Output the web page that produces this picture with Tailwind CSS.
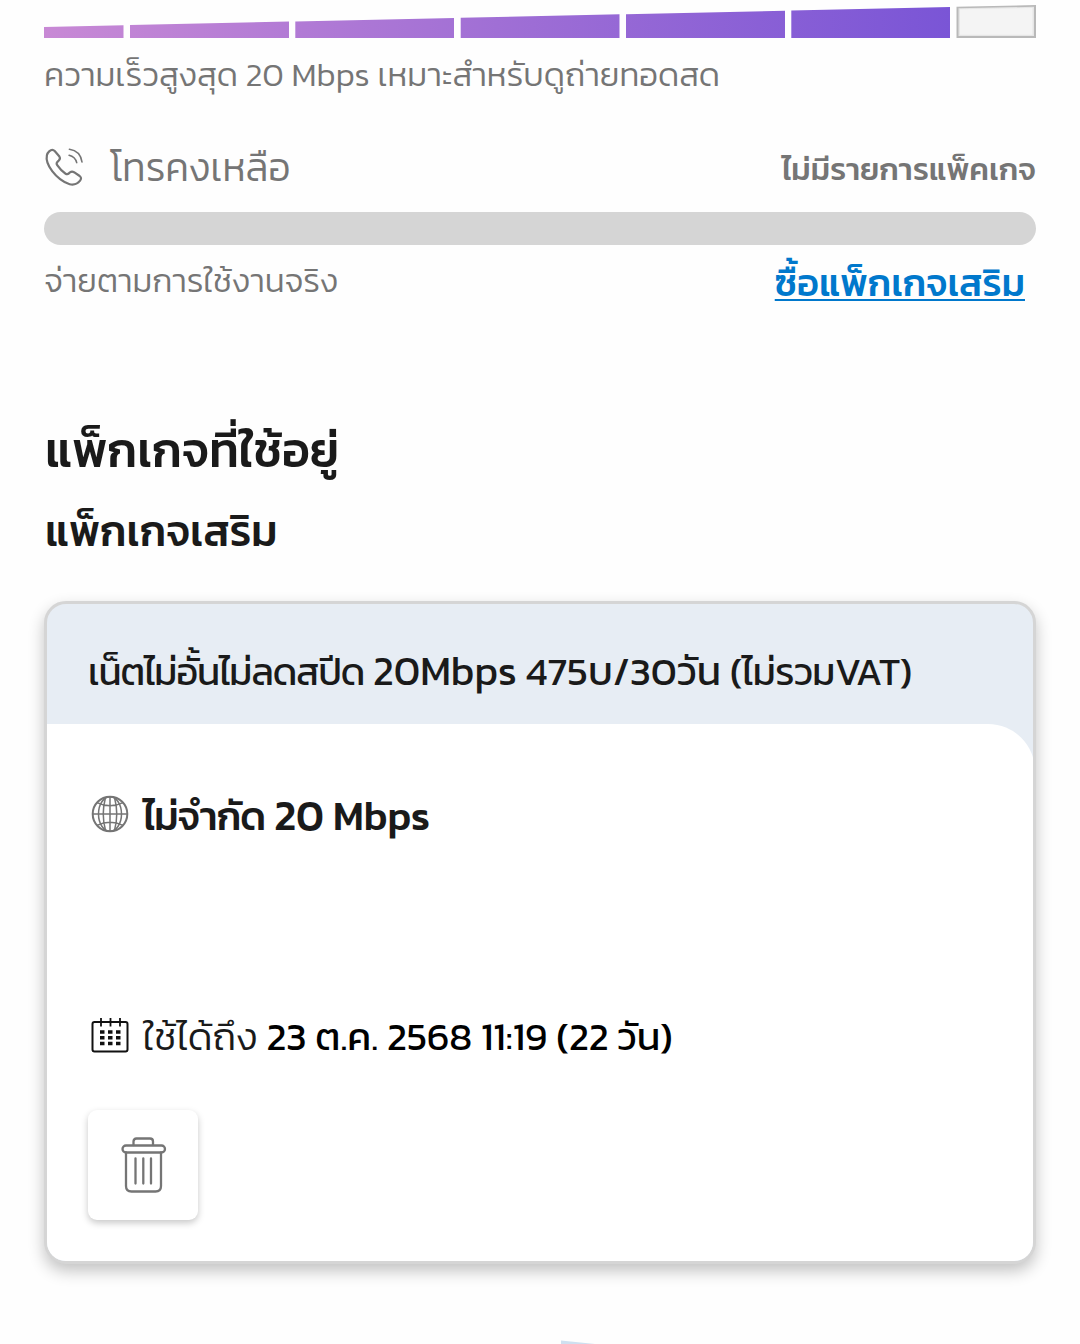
<!DOCTYPE html>
<html lang="th">
<head>
<meta charset="utf-8">
<meta name="viewport" content="width=device-width, initial-scale=1">
<title>แพ็กเกจที่ใช้อยู่</title>
<script src="https://cdn.jsdelivr.net/npm/@tailwindcss/browser@4"></script>
</head>
<body class="h-[1344px] overflow-hidden bg-[#fefefe] font-['Kanit','Noto_Sans_Thai','Noto_Sans',sans-serif] text-[#1a1a1a]">
<main class="flex flex-col px-[44px]">
  <!-- speed meter -->
  <svg class="block h-[38px] w-[992px]" viewBox="0 0 992 38">
    <defs>
      <linearGradient id="speed" x1="0" y1="0" x2="906" y2="0" gradientUnits="userSpaceOnUse">
        <stop offset="0" stop-color="#c889d5"/><stop offset=".5" stop-color="#a06fd5"/><stop offset="1" stop-color="#7a55d6"/>
      </linearGradient>
    </defs>
    <g fill="url(#speed)">
      <path d="M0 27L79.500 25.300V38H0z"/>
      <path d="M86 25.100L245 21.600V38H86z"/>
      <path d="M251.300 21.400L410 18V38H251.300z"/>
      <path d="M416.700 17.800L575.500 14.300V38H416.700z"/>
      <path d="M582 14.200L741 10.700V38H582z"/>
      <path d="M747.300 10.500L906 7V38H747.300z"/>
    </g>
    <path d="M912.500 6.800L992 5V38H912.500z" fill="#b9b9b9"/>
    <path d="M914.500 8.200L990 6.800V36H914.500z" fill="#e6e6e6"/>
    <path d="M916 9.300L988.500 8V34.800H916z" fill="#f4f4f4"/>
  </svg>
  <p class="mt-[16px] whitespace-nowrap text-[33.250px] leading-[40px] font-light text-[#757575]">ความเร็วสูงสุด 20 Mbps เหมาะสำหรับดูถ่ายทอดสด</p>

  <section class="mt-[46px]">
    <div class="flex h-[52px] items-start justify-between text-[#757575]">
      <div class="flex h-[54px] items-center">
        <svg class="h-[40px] w-[40px]" viewBox="0 0 40 40" fill="none" stroke="#757575" stroke-width="2.200" stroke-linecap="round" stroke-linejoin="round">
          <path d="M5.200 4.400C6.900 2.800 9 2.300 10.700 4L15.400 9.500C16.300 10.900 15.900 12.400 14.800 13.500L13.200 15.100C12.200 16.300 12.600 17.300 13.400 18.400C15.500 21.500 18.600 24.800 21.600 26.700C22.900 27.500 23.900 27.400 24.900 26.400L26 25.300C27.300 24.400 28.700 24.400 30 25.200L35.700 29C37.400 30.300 37.400 32 36.100 33.600C33.500 36.700 29.700 38.200 25.700 37.200C19.500 35.700 12.200 29.500 8.200 24.200C4.300 19 1.800 13.300 2.900 8.300C3.300 6.600 4 5.500 5.200 4.400Z"/>
          <path d="M25.400 2.300C32.400 3.300 37 8.200 38 15" stroke-width="1.600"/>
          <path d="M25.100 8.300C29.200 9.300 31.600 11.500 32.700 15.600" stroke-width="1.600"/>
        </svg>
        <span class="ml-[26px] whitespace-nowrap text-[39px] leading-[54px] font-light">โทรคงเหลือ</span>
      </div>
      <span class="mt-[9px] whitespace-nowrap text-[31.500px] leading-[40px] font-medium">ไม่มีรายการแพ็คเกจ</span>
    </div>
    <div class="mt-[20px] h-[33px] rounded-full bg-[#d5d5d5]"></div>
    <div class="mt-[16px] flex h-[44px] items-start justify-between whitespace-nowrap">
      <span class="text-[33.100px] leading-[40px] font-light text-[#757575]">จ่ายตามการใช้งานจริง</span>
      <a class="mt-[2px] mr-[11px] text-[37.800px] leading-[40px] font-medium text-[#0078cc] underline decoration-2 underline-offset-[3px] [text-decoration-skip-ink:none]">ซื้อแพ็กเกจเสริม</a>
    </div>
  </section>

  <h1 class="mt-[115px] pl-px text-[48.300px] leading-[60px] font-medium">แพ็กเกจที่ใช้อยู่</h1>
  <h2 class="mt-[26px] pl-px text-[42.700px] leading-[50px] font-medium">แพ็กเกจเสริม</h2>

  <section class="mt-[45px] h-[663px] overflow-hidden rounded-[22px] border-[3px] border-[#d5d5d5] bg-[#e7edf4] shadow-[0_7px_16px_rgba(0,0,0,0.24)]">
    <h3 class="flex h-[120px] items-baseline gap-[9px] pt-[42px] pl-[41px] text-[38.150px] leading-[50px] font-normal whitespace-nowrap">
      <span class="tracking-[-1.150px]">เน็ตไม่อั้นไม่ลดสปีด</span>
      <span class="text-[40.600px]">20Mbps</span>
      <span class="text-[40px]">475บ/30วัน</span>
      <span class="tracking-[-0.550px]">(ไม่รวมVAT)</span>
    </h3>
    <div class="-mr-[2px] flex h-[537px] flex-col rounded-tr-[47px] bg-white pt-[67px] pl-[41px]">
      <div class="flex h-[50px] items-center">
        <svg class="mt-[-5px] ml-[3px] h-[38px] w-[38px]" viewBox="0 0 38 38" fill="none" stroke="#757575" stroke-width="1.500">
          <circle cx="19" cy="19" r="17.300" stroke-width="2"/>
          <ellipse cx="19" cy="19" rx="11.500" ry="17.300"/>
          <path d="M19 1.700V36.300M1.700 19H36.300M14.500 2.500Q10 19 14.500 35.500M23.500 2.500Q28 19 23.500 35.500M6 7.600Q19 14 32 7.600M6 30.400Q19 24 32 30.400"/>
        </svg>
        <p class="mt-[-2px] ml-[14px] flex items-baseline gap-[9px] whitespace-nowrap text-[39.700px] leading-[50px] font-medium">
          <span class="tracking-[-1px]">ไม่จำกัด</span>
          <span class="text-[42.500px]">20</span>
          <span class="text-[40.300px]">Mbps</span>
        </p>
      </div>
      <div class="mt-[171px] flex h-[50px] items-center whitespace-nowrap">
        <svg class="mt-[-3px] ml-[3px] h-[38px] w-[38px]" viewBox="0 0 38 38" fill="none" stroke="#111" stroke-width="2">
          <rect x="1.500" y="5" width="35" height="29.500" rx="2"/>
          <path d="M10 1V9.500M19.500 1V9.500M29 1V9.500" stroke-width="1.800"/>
          <path d="M9 15H13.500M17 15H21.500M25 15H29.500M9 20.700H13.500M17 20.700H21.500M25 20.700H29.500M9 26.400H13.500M17 26.400H21.500M25 26.400H29.500" stroke-width="3.500"/>
        </svg>
        <p class="mt-[-2px] ml-[14px] text-[38.850px] leading-[50px] font-light">ใช้ได้ถึง <span class="font-normal text-black">23 ต.ค. 2568 11:19 (22 วัน)</span></p>
      </div>
      <button class="mt-[48px] flex h-[110px] w-[110px] items-center justify-center rounded-[9px] bg-white shadow-[0_3px_7px_rgba(0,0,0,0.22)]">
        <svg class="mt-[-1px] ml-[2px] h-[58px] w-[46px]" viewBox="0 0 46 58" fill="none" stroke="#757575" stroke-width="2.300" stroke-linecap="round">
          <path d="M12.500 9V5.500Q12.500 2.500 15.500 2.500H29Q32 2.500 32 5.500V9"/>
          <rect x="1.500" y="9.500" width="42.500" height="7" rx="3.500"/>
          <path d="M5 16.500V50Q5 55.500 10.500 55.500H34.500Q40 55.500 40 50V16.500M14.500 22.500V47.500M22.300 22.500V47.500M30 22.500V47.500"/>
        </svg>
      </button>
    </div>
  </section>
  <svg class="mt-[76px] ml-[516px] h-[4px] w-[40px]" viewBox="0 0 40 4"><path d="M1 0.500L35 4H1z" fill="#cfe0f0"/></svg>
</main>
</body>
</html>
